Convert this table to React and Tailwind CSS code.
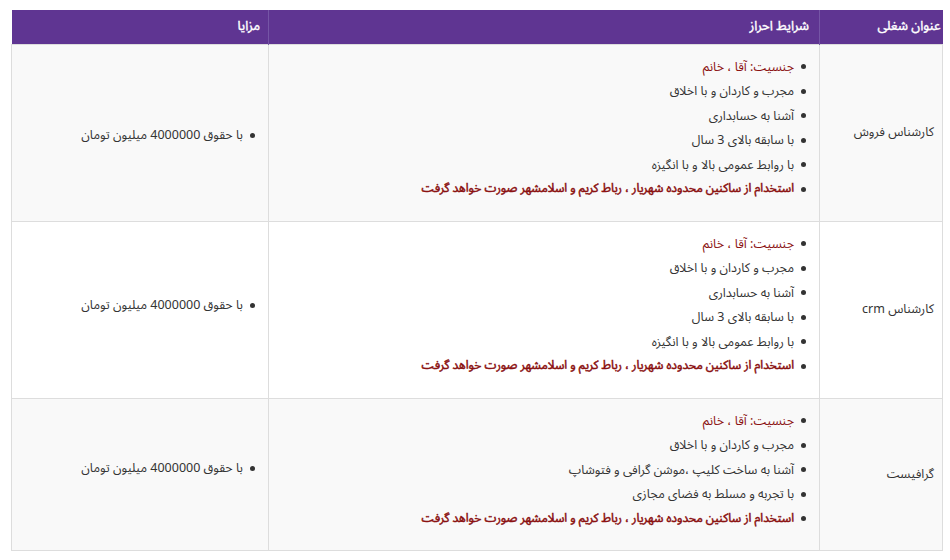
import React from "react";

const RED = "text-[#8b1212]";

const rows = [
  {
    title: "کارشناس فروش",
    items: [
      { t: "جنسیت: آقا ، خانم", k: "red" },
      { t: "مجرب و کاردان و با اخلاق" },
      { t: "آشنا به حسابداری" },
      { t: "با سابقه بالای 3 سال" },
      { t: "با روابط عمومی بالا و با انگیزه" },
      { t: "استخدام از ساکنین محدوده شهریار ، رباط کریم و اسلامشهر صورت خواهد گرفت", k: "bold" },
    ],
    bg: "bg-[#f9f9f9]",
    h: "h-[177px]",
    benefitPad: "pt-[5px]",
  },
  {
    title: "کارشناس crm",
    items: [
      { t: "جنسیت: آقا ، خانم", k: "red" },
      { t: "مجرب و کاردان و با اخلاق" },
      { t: "آشنا به حسابداری" },
      { t: "با سابقه بالای 3 سال" },
      { t: "با روابط عمومی بالا و با انگیزه" },
      { t: "استخدام از ساکنین محدوده شهریار ، رباط کریم و اسلامشهر صورت خواهد گرفت", k: "bold" },
    ],
    bg: "bg-white",
    h: "h-[177px]",
    benefitPad: "pb-[9px]",
  },
  {
    title: "گرافیست",
    items: [
      { t: "جنسیت: آقا ، خانم", k: "red" },
      { t: "مجرب و کاردان و با اخلاق" },
      { t: "آشنا به ساخت کلیپ ،موشن گرافی و فتوشاپ" },
      { t: "با تجربه و مسلط به فضای مجازی" },
      { t: "استخدام از ساکنین محدوده شهریار ، رباط کریم و اسلامشهر صورت خواهد گرفت", k: "bold" },
    ],
    bg: "bg-[#f9f9f9]",
    h: "h-[152px]",
    benefitPad: "pb-[12px]",
  },
];

function Item({ t, k }) {
  const cls =
    k === "red"
      ? `${RED} text-[12.5px]`
      : k === "bold"
      ? `${RED} text-[12px] font-normal [-webkit-text-stroke:0.5px_#8b1212]`
      : "text-[#333333] text-[12.5px]";
  return (
    <li className="flex items-center gap-[6px] h-[24.5px]">
      <span className="w-[5px] h-[5px] rounded-full bg-[#333333] shrink-0 ml-[1px]" />
      <span className={`${cls} leading-[24.5px]`}>{t}</span>
    </li>
  );
}

export default function App() {
  return (
    <div
      className="w-[950px] h-[560px] bg-white pt-[10px] pl-[11px]"
      style={{ fontFamily: '"Noto Sans Arabic", Tahoma, "DejaVu Sans", sans-serif' }}
    >
      <table dir="rtl" className="w-[931px] border-collapse text-[13px] table-fixed">
        <colgroup>
          <col className="w-[123px]" />
          <col className="w-[551px]" />
          <col className="w-[257px]" />
        </colgroup>
        <thead>
          <tr className="bg-[#5f3592] h-[34px] text-white">
            <th className="text-right pr-[2px] align-middle border-l border-[#7555a6] font-normal [-webkit-text-stroke:0.4px_#ffffff]">عنوان شغلی</th>
            <th className="text-right pr-[10px] align-middle border-l border-[#7555a6] font-normal [-webkit-text-stroke:0.4px_#ffffff]">شرایط احراز</th>
            <th className="text-right pr-[8px] align-middle font-normal [-webkit-text-stroke:0.4px_#ffffff]">مزایا</th>
          </tr>
        </thead>
        <tbody>
          {rows.map((r, i) => (
            <tr key={i} className={`${r.bg} ${r.h}`}>
              <td className="border border-[#dddddd] align-middle text-right pr-[8px] text-[#333333] text-[12.5px]">
                {r.title}
              </td>
              <td className="border border-[#dddddd] align-top pt-[10px] pr-[13px]">
                <ul className="flex flex-col">
                  {r.items.map((it, j) => (
                    <Item key={j} {...it} />
                  ))}
                </ul>
              </td>
              <td className={`border border-[#dddddd] align-middle pr-[13px] ${r.benefitPad}`}>
                <ul>
                  <Item t="با حقوق 4000000 میلیون تومان" />
                </ul>
              </td>
            </tr>
          ))}
        </tbody>
      </table>
    </div>
  );
}
